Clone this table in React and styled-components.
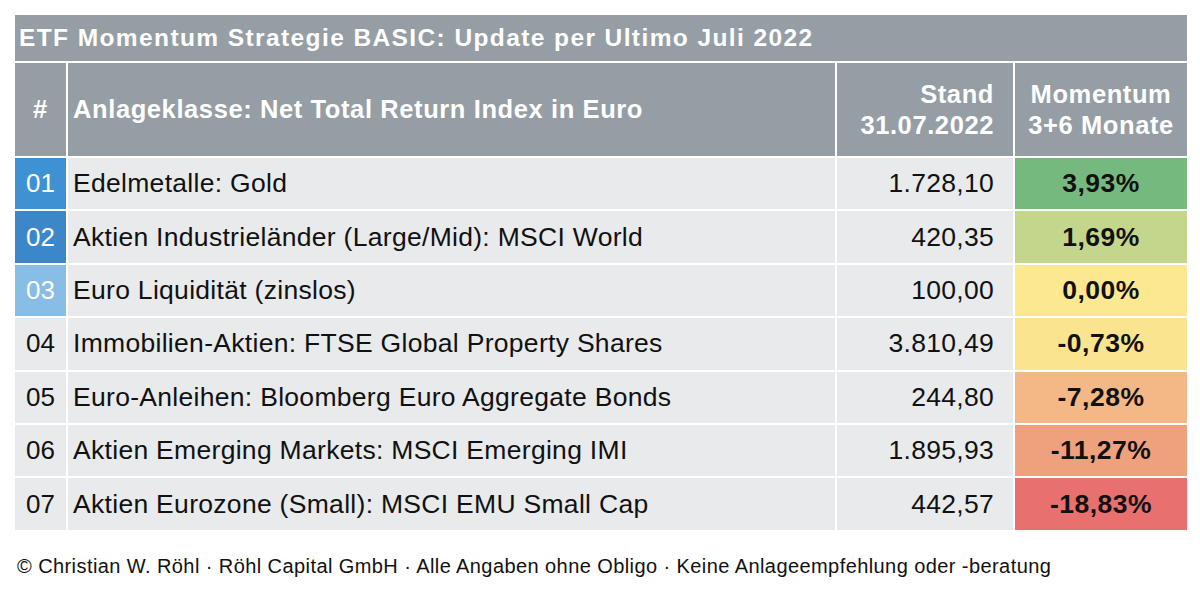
import React from 'react'
import styled, { createGlobalStyle } from 'styled-components'

const GlobalStyle = createGlobalStyle`
  html, body {
    margin: 0;
    padding: 0;
    background: #ffffff;
  }
  body {
    font-family: 'Liberation Sans', Arial, Helvetica, sans-serif;
    color: #111;
  }
`

const Page = styled.div`
  padding: 15px 13px 0 15px;
  width: 1200px;
  box-sizing: border-box;
`

const Table = styled.div`
  display: grid;
  grid-template-columns: 51px 767px 176px 172px;
  grid-template-rows: 46px 93px repeat(7, 51.4px);
  gap: 2px;
  background: #ffffff;
  width: 1172px;
`

const TitleCell = styled.div`
  grid-column: 1 / -1;
  background: #959ea5;
  color: #fff;
  font-weight: bold;
  font-size: 24.5px;
  letter-spacing: 1.4px;
  display: flex;
  align-items: center;
  padding-left: 4px;
  white-space: nowrap;
`

const HeadCell = styled.div`
  background: #959ea5;
  color: #fff;
  font-weight: bold;
  font-size: 25.5px;
  letter-spacing: 0.6px;
  line-height: 31px;
  display: flex;
  align-items: center;
  white-space: nowrap;
  justify-content: ${p => p.$align === 'right' ? 'flex-end' : p.$align === 'center' ? 'center' : 'flex-start'};
  text-align: ${p => p.$align || 'left'};
  padding: ${p => p.$align === 'right' ? '0 19px 0 0' : p.$align === 'center' ? '0' : '0 0 0 5px'};
`

const NumCell = styled.div`
  background: ${p => p.$bg || '#e8eaec'};
  color: ${p => p.$bg ? '#fff' : '#111'};
  font-size: 26px;
  display: flex;
  align-items: center;
  justify-content: center;
`

const NameCell = styled.div`
  background: #e8eaec;
  font-size: 26.5px;
  letter-spacing: 0.3px;
  display: flex;
  align-items: center;
  padding-left: 5px;
  white-space: nowrap;
`

const ValueCell = styled.div`
  background: #e8eaec;
  font-size: 26.5px;
  letter-spacing: 0.3px;
  display: flex;
  align-items: center;
  justify-content: flex-end;
  padding-right: 19px;
`

const MomentumCell = styled.div`
  background: ${p => p.$bg};
  font-size: 26.5px;
  letter-spacing: 0.5px;
  font-weight: bold;
  display: flex;
  align-items: center;
  justify-content: center;
`

const Footer = styled.div`
  margin-top: 25px;
  margin-left: 2px;
  font-size: 20px;
  letter-spacing: 0.42px;
  color: #111;
  white-space: nowrap;
`

const rows = [
  { nr: '01', name: 'Edelmetalle: Gold', value: '1.728,10', mom: '3,93%', numBg: '#3e91d2', momBg: '#75b97f' },
  { nr: '02', name: 'Aktien Industrieländer (Large/Mid): MSCI World', value: '420,35', mom: '1,69%', numBg: '#3c87c9', momBg: '#c3d68b' },
  { nr: '03', name: 'Euro Liquidität (zinslos)', value: '100,00', mom: '0,00%', numBg: '#88bde6', momBg: '#fce891' },
  { nr: '04', name: 'Immobilien-Aktien: FTSE Global Property Shares', value: '3.810,49', mom: '-0,73%', momBg: '#fbe48f' },
  { nr: '05', name: 'Euro-Anleihen: Bloomberg Euro Aggregate Bonds', value: '244,80', mom: '-7,28%', momBg: '#f3b886' },
  { nr: '06', name: 'Aktien Emerging Markets: MSCI Emerging IMI', value: '1.895,93', mom: '-11,27%', momBg: '#efa07d' },
  { nr: '07', name: 'Aktien Eurozone (Small): MSCI EMU Small Cap', value: '442,57', mom: '-18,83%', momBg: '#e8706f' },
]

export default function App() {
  return (
    <>
      <GlobalStyle />
      <Page>
        <Table>
          <TitleCell>ETF Momentum Strategie BASIC: Update per Ultimo Juli 2022</TitleCell>
          <HeadCell $align="center">#</HeadCell>
          <HeadCell>Anlageklasse: Net Total Return Index in Euro</HeadCell>
          <HeadCell $align="right">Stand<br />31.07.2022</HeadCell>
          <HeadCell $align="center">Momentum<br />3+6 Monate</HeadCell>
          {rows.map(r => (
            <React.Fragment key={r.nr}>
              <NumCell $bg={r.numBg}>{r.nr}</NumCell>
              <NameCell>{r.name}</NameCell>
              <ValueCell>{r.value}</ValueCell>
              <MomentumCell $bg={r.momBg}>{r.mom}</MomentumCell>
            </React.Fragment>
          ))}
        </Table>
        <Footer>© Christian W. Röhl · Röhl Capital GmbH · Alle Angaben ohne Obligo · Keine Anlageempfehlung oder -beratung</Footer>
      </Page>
    </>
  )
}
